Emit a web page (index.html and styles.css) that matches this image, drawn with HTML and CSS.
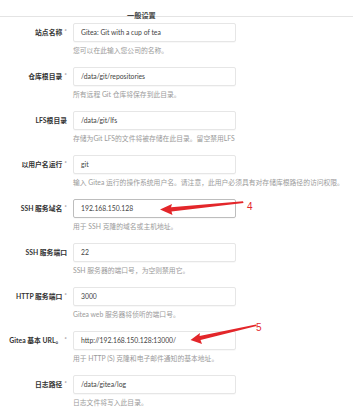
FILE: index.html
```html
<!DOCTYPE html>
<html lang="zh">
<head>
<meta charset="utf-8">
<title>一般设置</title>
<link rel="stylesheet" href="styles.css">
</head>
<body>
<div class="page">
  <div class="header"><span class="title">一般设置</span></div>
  <form class="form">
    <div class="row">
      <div class="field"><label class="label">站点名称<span class="req">*</span></label><div class="input">Gitea: Git with a cup of tea</div></div>
      <div class="help">您可以在此输入您公司的名称。</div>
    </div>
    <div class="row">
      <div class="field"><label class="label">仓库根目录<span class="req">*</span></label><div class="input">/data/git/repositories</div></div>
      <div class="help">所有远程 Git 仓库将保存到此目录。</div>
    </div>
    <div class="row">
      <div class="field"><label class="label">LFS根目录</label><div class="input">/data/git/lfs</div></div>
      <div class="help">存储为Git LFS的文件将被存储在此目录。留空禁用LFS</div>
    </div>
    <div class="row">
      <div class="field"><label class="label">以用户名运行<span class="req">*</span></label><div class="input">git</div></div>
      <div class="help">输入 Gitea 运行的操作系统用户名。请注意，此用户必须具有对存储库根路径的访问权限。</div>
    </div>
    <div class="row">
      <div class="field"><label class="label">SSH 服务域名<span class="req">*</span></label><div class="input focus">192.168.150.128</div></div>
      <div class="help">用于 SSH 克隆的域名或主机地址。</div>
    </div>
    <div class="row">
      <div class="field"><label class="label">SSH 服务端口</label><div class="input">22</div></div>
      <div class="help">SSH 服务器的端口号，为空则禁用它。</div>
    </div>
    <div class="row">
      <div class="field"><label class="label">HTTP 服务端口<span class="req">*</span></label><div class="input">3000</div></div>
      <div class="help">Gitea web 服务器将侦听的端口号。</div>
    </div>
    <div class="row">
      <div class="field"><label class="label">Gitea 基本 URL。<span class="req">*</span></label><div class="input">http://192.168.150.128:13000/</div></div>
      <div class="help">用于 HTTP (S) 克隆和电子邮件通知的基本地址。</div>
    </div>
    <div class="row">
      <div class="field"><label class="label">日志路径<span class="req">*</span></label><div class="input">/data/gitea/log</div></div>
      <div class="help">日志文件将写入此目录。</div>
    </div>
  </form>
  <svg class="annot" width="353" height="417" viewBox="0 0 353 417">
    <polygon points="160,209.5 172,204 171,207.2 243,201.3 243.5,203 171.5,211.5 172.5,215" fill="#e3262a"/>
    <text x="247" y="210" class="num">4</text>
    <polygon points="190.5,340 200,333 199.5,336 256,324.5 256.5,326 200.5,340 202,344" fill="#e3262a"/>
    <text x="256" y="331" class="num">5</text>
  </svg>
</div>
</body>
</html>
```

FILE: styles.css
```css
* { box-sizing: border-box; }
html, body { margin: 0; padding: 0; background: #fff; }
body {
  font-family: Lato, "Noto Sans CJK SC", "Noto Sans", sans-serif;
  color: #333;
}
.page {
  position: relative;
  width: 353px;
  height: 417px;
  overflow: hidden;
}
.header {
  height: 17px;
  border-bottom: 1px solid #e4e4e4;
  padding-left: 127px;
  padding-top: 2px;
}
.title {
  font-size: 7.2px;
  line-height: 9px;
  font-weight: 700;
  color: #444;
}
.form {
  display: flex;
  flex-direction: column;
  padding-top: 6px;
}
.row {
  display: flex;
  flex-direction: column;
  height: 44px;
}
.field {
  display: flex;
  align-items: center;
  gap: 6px;
}
.label {
  width: 67px;
  text-align: right;
  font-size: 6.8px;
  font-weight: 700;
  color: #333;
  white-space: nowrap;
  line-height: 9px;
}
.req {
  display: inline-block;
  font-size: 6.5px;
  line-height: 6px;
  font-weight: 400;
  color: #777;
  vertical-align: top;
  margin-left: 2px;
}
.input {
  width: 163px;
  height: 19px;
  border: 1px solid #e6e6e6;
  border-radius: 2px;
  padding-left: 7px;
  font-size: 6.8px;
  line-height: 17px;
  color: #444;
  white-space: nowrap;
  box-shadow: 0 1px 1px rgba(0,0,0,0.03);
}
.input.focus {
  border-color: #bdbdbd;
}
.help {
  margin-left: 73px;
  margin-top: 4px;
  font-size: 6.8px;
  line-height: 9px;
  color: #9a9a9a;
  white-space: nowrap;
}
.annot {
  position: absolute;
  left: 0;
  top: 0;
  pointer-events: none;
}
.num {
  font-family: "Liberation Sans", sans-serif;
  font-size: 10px;
  fill: #e3262a;
}
```
